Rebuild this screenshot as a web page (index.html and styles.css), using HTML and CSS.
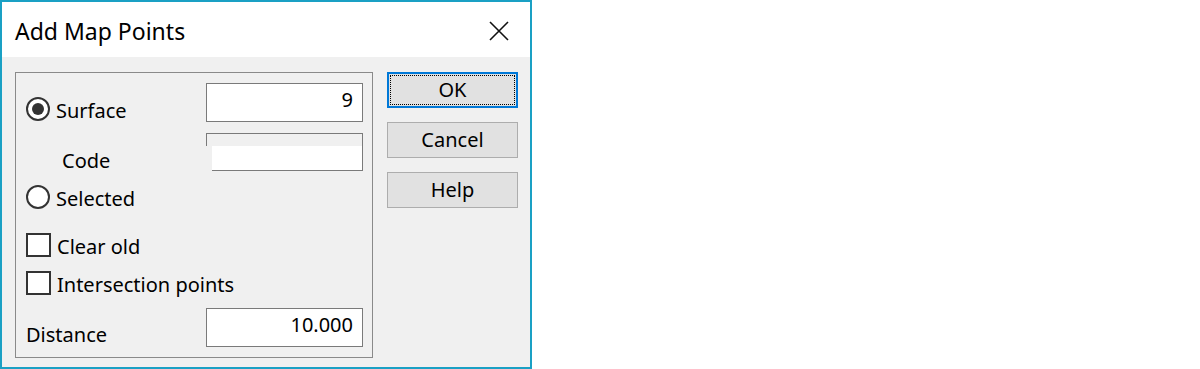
FILE: index.html
```html
<!DOCTYPE html>
<html lang="en">
<head>
    <meta charset="UTF-8">
    <title>Add Map Points</title>
    <link rel="stylesheet" href="styles.css">
</head>
<body>
    <div class="dialog">
        <div class="titlebar">
            <span class="title">Add Map Points</span>
            <svg class="close" width="20" height="20" viewBox="0 0 20 20">
                <path d="M1 1 L19 19 M19 1 L1 19" stroke="#111" stroke-width="1.6" fill="none"/>
            </svg>
        </div>

        <div class="content">
            <div class="group">
                <div class="col-left">
                    <label class="row row-surface">
                        <span class="radio checked"></span><span class="text">Surface</span>
                    </label>
                    <div class="row row-code"><span class="text">Code</span></div>
                    <label class="row row-selected">
                        <span class="radio"></span><span class="text">Selected</span>
                    </label>
                    <label class="row row-clear">
                        <span class="checkbox"></span><span class="text">Clear old</span>
                    </label>
                    <label class="row row-inter">
                        <span class="checkbox"></span><span class="text">Intersection points</span>
                    </label>
                    <div class="row row-distance"><span class="text">Distance</span></div>
                </div>

                <div class="col-right">
                    <input class="field field-surface" type="text" value="9">
                    <div class="code-box">
                        <div class="code-top"></div>
                        <div class="code-fill"></div>
                    </div>
                    <input class="field field-distance" type="text" value="10.000">
                </div>
            </div>

            <div class="buttons">
                <button class="btn btn-default"><span>OK</span></button>
                <button class="btn">Cancel</button>
                <button class="btn">Help</button>
            </div>
        </div>
    </div>
</body>
</html>
```

FILE: styles.css
```css
body {
    margin: 0;
    background: #fff;
    font-family: 'Noto Sans', 'Open Sans', sans-serif;
    color: #000;
}

.dialog {
    width: 532px;
    height: 369px;
    box-sizing: border-box;
    border: 2px solid #1aa0c4;
    background: #f0f0f0;
}

.titlebar {
    height: 55px;
    background: #fff;
    display: flex;
    align-items: center;
}

.title {
    font-size: 23px;
    padding-left: 13px;
    padding-top: 3px;
}

.close {
    margin-left: auto;
    margin-right: 21px;
    margin-top: 2px;
}

.content {
    display: flex;
    padding: 15px 0 0 13px;
}

.group {
    width: 358px;
    height: 286px;
    box-sizing: border-box;
    border: 1px solid #8a8a8a;
    display: flex;
}

.col-left {
    width: 180px;
    padding-left: 10px;
    display: flex;
    flex-direction: column;
}

.row {
    height: 24px;
    line-height: 24px;
    font-size: 20px;
    display: flex;
    align-items: flex-start;
    white-space: nowrap;
}

.row .text {
    margin-top: 2px;
}

.row-surface { margin-top: 24px; }
.row-code { margin-top: 26px; padding-left: 36px; }
.row-selected { margin-top: 14px; }
.row-clear { margin-top: 24px; }
.row-inter { margin-top: 14px; }
.row-distance { margin-top: 26px; }

.radio {
    flex-shrink: 0;
    width: 24px;
    height: 24px;
    box-sizing: border-box;
    border: 2px solid #333;
    border-radius: 50%;
    background: #fff;
    margin-right: 6px;
    display: flex;
    align-items: center;
    justify-content: center;
}

.radio.checked::after {
    content: "";
    width: 12px;
    height: 12px;
    border-radius: 50%;
    background: #333;
}

.checkbox {
    flex-shrink: 0;
    width: 25px;
    height: 24px;
    box-sizing: border-box;
    border: 2px solid #333;
    background: #fff;
    margin-right: 6px;
}

.col-right {
    width: 157px;
    display: flex;
    flex-direction: column;
}

.field {
    width: 157px;
    height: 39px;
    box-sizing: border-box;
    border: 1px solid #7a7a7a;
    background: #fff;
    padding: 3px 9px 10px;
    margin: 0;
    font-family: inherit;
    font-size: 20px;
    line-height: 24px;
    text-align: right;
    outline: none;
}

.field-surface { margin-top: 10px; }
.field-distance { margin-top: 137px; }

.code-box {
    margin-top: 11px;
    height: 38px;
    box-sizing: border-box;
    border-top: 1px solid #7a7a7a;
    border-right: 1px solid #7a7a7a;
    display: flex;
    flex-direction: column;
}

.code-top {
    height: 12px;
    border-left: 1px solid #7a7a7a;
}

.code-fill {
    flex: 1;
    margin-left: 6px;
    background: #fff;
    border-bottom: 1px solid #7a7a7a;
}

.buttons {
    margin-left: 14px;
    display: flex;
    flex-direction: column;
    gap: 14px;
}

.btn {
    width: 131px;
    height: 36px;
    box-sizing: border-box;
    border: 1px solid #adadad;
    background: #e1e1e1;
    font-family: inherit;
    font-size: 20px;
    line-height: 24px;
    padding: 0;
    color: #000;
}

.btn-default {
    border: 2px solid #0078d7;
    padding: 1px;
}

.btn-default span {
    display: flex;
    align-items: center;
    justify-content: center;
    height: 100%;
    box-sizing: border-box;
    border: 1px dotted #000;
}
```
